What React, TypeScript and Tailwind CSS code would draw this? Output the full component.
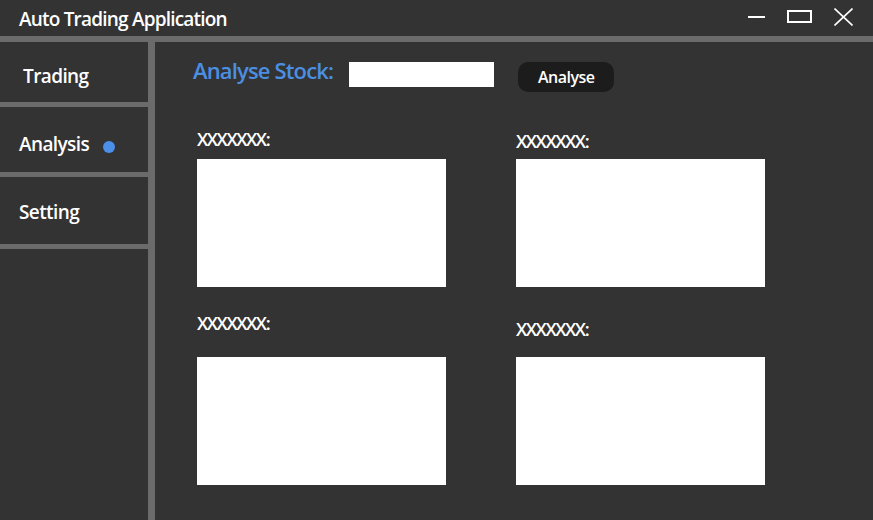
const font = { fontFamily: '"Open Sans", "Noto Sans", sans-serif' };

const NavItem = ({ label, h, pt, pl, active }: { label: string; h: string; pt: string; pl: string; active?: boolean }) => (
  <div className={`flex items-start text-[19px] font-semibold leading-[28px] tracking-[-0.6px] text-white ${h} ${pt} ${pl}`}>
    <span>{label}</span>
    {active && <span className="ml-[14px] mt-[11px] h-[12px] w-[12px] rounded-full bg-[#4a8fe8]" />}
  </div>
);

const Panel = ({ block, pt }: { block: string; pt: string }) => (
  <div className="flex flex-col">
    <div className={`${block} ${pt}`}>
      <div className="text-[18px] font-semibold leading-[24px] tracking-[-1.4px] text-white">XXXXXXX:</div>
    </div>
    <div className="h-[128px] w-[249px] bg-white" />
  </div>
);

export default function App() {
  return (
    <div className="flex h-[520px] w-[873px] flex-col bg-[#333333]" style={font}>
      <div className="flex h-[36px] items-center justify-between pl-[19px] pr-[20px]">
        <span className="mt-[1px] text-[19px] font-semibold leading-[28px] tracking-[-0.8px] text-white">Auto Trading Application</span>
        <div className="mb-[3px] flex items-center gap-[22px]">
          <div className="h-[2px] w-[17px] bg-white" />
          <div className="h-[13px] w-[25px] border-2 border-white" />
          <svg width="19" height="18" viewBox="0 0 19 18">
            <path d="M0.5 0.5 L18.5 17.5 M18.5 0.5 L0.5 17.5" stroke="white" strokeWidth="1.6" />
          </svg>
        </div>
      </div>
      <div className="h-[6px] bg-[#6b6b6b]" />
      <div className="flex flex-1">
        <div className="flex w-[148px] flex-col">
          <NavItem label="Trading" h="h-[60px]" pt="pt-[20px]" pl="pl-[23px]" />
          <div className="h-[5px] bg-[#6b6b6b]" />
          <NavItem label="Analysis" h="h-[65px]" pt="pt-[23px]" pl="pl-[19px]" active />
          <div className="h-[5px] bg-[#6b6b6b]" />
          <NavItem label="Setting" h="h-[67px]" pt="pt-[21px]" pl="pl-[19px]" />
          <div className="h-[5px] bg-[#6b6b6b]" />
        </div>
        <div className="w-[7px] bg-[#6b6b6b]" />
        <div className="flex flex-1 flex-col pl-[38px] pt-[13px]">
          <div className="flex items-start">
            <span className="text-[22px] font-semibold leading-[30px] tracking-[-0.85px] text-[#4a8fe2]">Analyse Stock:</span>
            <div className="ml-[16px] mt-[7px] h-[25px] w-[145px] bg-white" />
            <button className="ml-[24px] mt-[7px] h-[30px] w-[96px] rounded-[10px] bg-[#1c1c1c] text-[16px] font-semibold tracking-[-0.5px] text-white">
              Analyse
            </button>
          </div>
          <div className="ml-[4px] mt-[35px] grid grid-cols-[249px_249px] gap-x-[70px]">
            <Panel block="h-[32px]" pt="pt-0" />
            <Panel block="h-[32px]" pt="pt-[2px]" />
            <Panel block="h-[70px]" pt="pt-[24px]" />
            <Panel block="h-[70px]" pt="pt-[30px]" />
          </div>
        </div>
      </div>
    </div>
  );
}
